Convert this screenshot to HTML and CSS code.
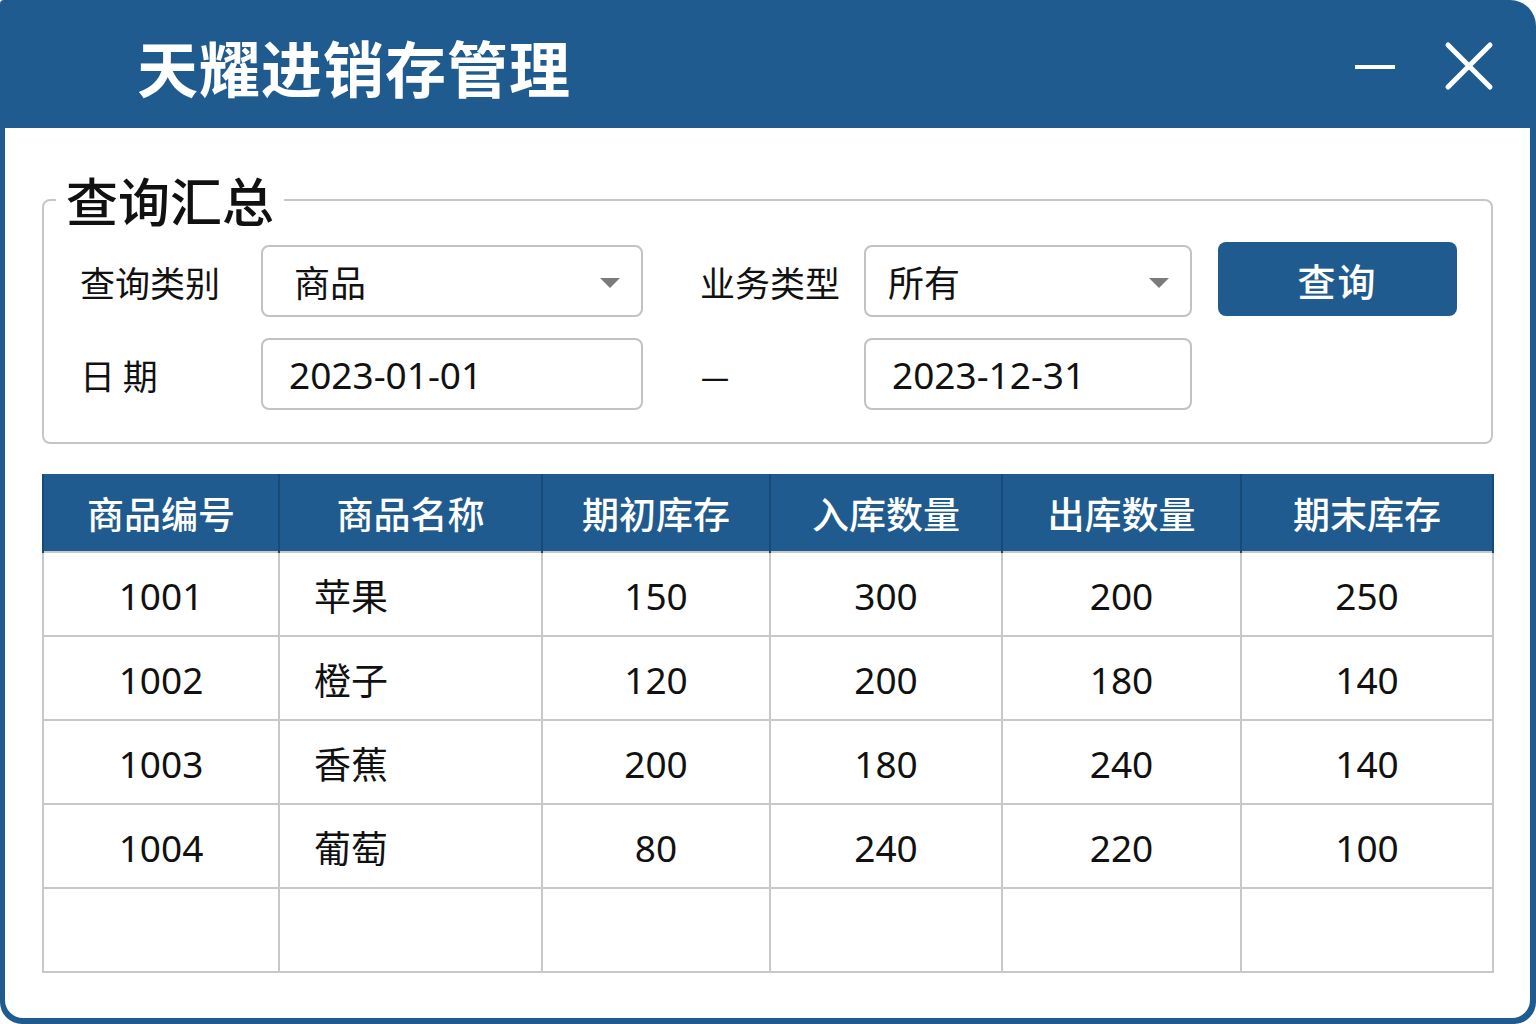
FILE: index.html
```html
<!DOCTYPE html>
<html lang="zh-CN">
<head>
    <meta charset="UTF-8">
    <meta name="viewport" content="width=device-width, initial-scale=1.0">
    <title>天耀进销存管理</title>
    <link rel="stylesheet" href="styles.css">
</head>
<body>
    <div class="window">
        <header class="titlebar">
            <h1 class="title">天耀进销存管理</h1>
            <div class="win-controls">
                <svg class="win-btn" width="42" height="42" viewBox="0 0 42 42">
                    <line x1="1" y1="22" x2="41" y2="22" stroke="#fff" stroke-width="4"/>
                </svg>
                <svg class="win-btn" width="50" height="50" viewBox="0 0 50 50">
                    <path d="M4 4 L46 46 M46 4 L4 46" stroke="#fff" stroke-width="5" stroke-linecap="round" fill="none"/>
                </svg>
            </div>
        </header>

        <main class="panel">
            <fieldset class="query-box">
                <legend>查询汇总</legend>
                <div class="query-grid">
                    <label class="q-label">查询类别</label>
                    <div class="field field-select field-first">商品<span class="caret"></span></div>
                    <label class="q-label q-label-mid">业务类型</label>
                    <div class="field field-select">所有<span class="caret"></span></div>
                    <button class="btn-query">查询</button>

                    <label class="q-label">日 期</label>
                    <div class="field">2023-01-01</div>
                    <span class="q-label q-label-mid dash">—</span>
                    <div class="field">2023-12-31</div>
                </div>
            </fieldset>

            <table class="summary">
                <colgroup>
                    <col style="width:236px">
                    <col style="width:263px">
                    <col style="width:228px">
                    <col style="width:232px">
                    <col style="width:239px">
                    <col style="width:252px">
                </colgroup>
                <thead>
                    <tr>
                        <th>商品编号</th>
                        <th>商品名称</th>
                        <th>期初库存</th>
                        <th>入库数量</th>
                        <th>出库数量</th>
                        <th>期末库存</th>
                    </tr>
                </thead>
                <tbody>
                    <tr><td>1001</td><td class="name">苹果</td><td>150</td><td>300</td><td>200</td><td>250</td></tr>
                    <tr><td>1002</td><td class="name">橙子</td><td>120</td><td>200</td><td>180</td><td>140</td></tr>
                    <tr><td>1003</td><td class="name">香蕉</td><td>200</td><td>180</td><td>240</td><td>140</td></tr>
                    <tr><td>1004</td><td class="name">葡萄</td><td>80</td><td>240</td><td>220</td><td>100</td></tr>
                    <tr><td></td><td class="name"></td><td></td><td></td><td></td><td></td></tr>
                </tbody>
            </table>
        </main>
    </div>
</body>
</html>
```

FILE: styles.css
```css
* {
    box-sizing: border-box;
    margin: 0;
    padding: 0;
}
body {
    font-family: "Noto Sans", "Noto Sans CJK SC", sans-serif;
    background-color: #fff;
    color: #111;
    width: 1536px;
    height: 1024px;
    overflow: hidden;
}
.window {
    display: flex;
    flex-direction: column;
    height: 1024px;
    background-color: #1f5b8e;
    border-radius: 4px 26px 22px 22px;
}
.titlebar {
    display: flex;
    align-items: center;
    justify-content: space-between;
    height: 128px;
    padding: 0 42px 0 137px;
    flex-shrink: 0;
}
.title {
    font-family: "Noto Sans CJK SC", sans-serif;
    font-size: 61px;
    font-weight: 700;
    color: #fff;
    letter-spacing: 1px;
    line-height: 1;
    margin-top: 4px;
}
.win-controls {
    display: flex;
    align-items: center;
    gap: 48px;
    margin-top: 4px;
}
.win-btn {
    display: block;
}
.panel {
    flex: 1;
    margin: 0 6px 6px 5px;
    background-color: #fff;
    border-radius: 0 0 18px 18px;
    padding: 41px 37px 0 37px;
}
.query-box {
    border: 2px solid #c6c6c6;
    border-radius: 8px;
    padding: 14px 0 32px 0;
}
.query-box legend {
    font-family: "Noto Sans CJK SC", sans-serif;
    font-size: 52px;
    font-weight: 500;
    line-height: 62px;
    margin-left: 12px;
    padding: 0 10px;
    color: #111;
}
.query-grid {
    display: grid;
    grid-template-columns: 181px 382px 221px 328px 265px;
    grid-auto-rows: 72px;
    row-gap: 21px;
    align-items: center;
    padding-left: 36px;
}
.q-label {
    font-family: "Noto Sans CJK SC", sans-serif;
    font-size: 35px;
    color: #111;
}
.q-label-mid {
    padding-left: 57px;
}
.dash {
    font-family: "Noto Sans", sans-serif;
    font-size: 28px;
    padding-left: 58px;
    padding-top: 4px;
}
.field {
    position: relative;
    display: flex;
    align-items: center;
    height: 72px;
    border: 2px solid #c2c2c2;
    border-radius: 8px;
    padding-left: 26px;
    font-size: 37px;
    color: #111;
}
.field-select {
    font-family: "Noto Sans CJK SC", sans-serif;
    font-size: 36px;
    padding-left: 22px;
}
.field-first {
    padding-left: 31px;
}
.caret {
    position: absolute;
    right: 21px;
    top: 31px;
    width: 0;
    height: 0;
    border-left: 10px solid transparent;
    border-right: 10px solid transparent;
    border-top: 10px solid #7b7b7b;
}
.btn-query {
    justify-self: end;
    width: 239px;
    height: 74px;
    margin-top: -4px;
    border: none;
    border-radius: 8px;
    background-color: #1f5b8e;
    color: #fff;
    font-family: "Noto Sans CJK SC", sans-serif;
    font-size: 38px;
    font-weight: 500;
    letter-spacing: 2px;
}
.summary {
    width: 1450px;
    margin-top: 30px;
    border-collapse: collapse;
    table-layout: fixed;
}
.summary th {
    height: 78px;
    background-color: #1f5b8e;
    color: #fff;
    font-family: "Noto Sans CJK SC", sans-serif;
    font-size: 37px;
    font-weight: 500;
    border-left: 2px solid #164b79;
    border-right: 2px solid #164b79;
}
.summary td {
    height: 84px;
    text-align: center;
    font-size: 37px;
    border: 2px solid #c8c8c8;
    padding-top: 2px;
}
.summary td.name {
    text-align: left;
    padding-left: 34px;
    font-family: "Noto Sans CJK SC", sans-serif;
    font-size: 37px;
}
```
